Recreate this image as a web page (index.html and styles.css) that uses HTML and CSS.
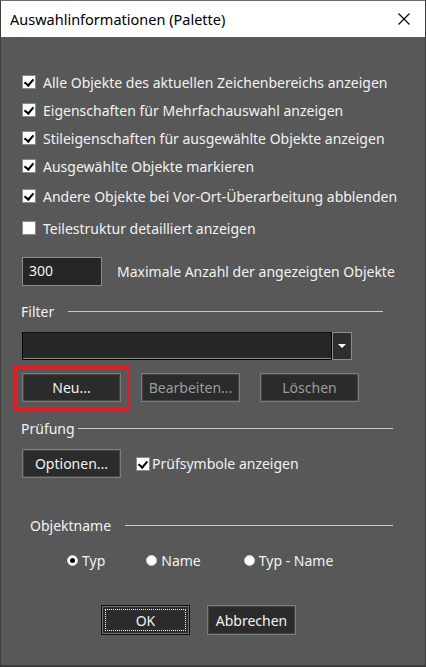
FILE: index.html
```html
<!DOCTYPE html>
<html lang="de">
<head>
    <meta charset="UTF-8">
    <title>Auswahlinformationen (Palette)</title>
    <link rel="stylesheet" href="styles.css">
</head>
<body>
    <div class="dialog">
        <div class="titlebar">
            <span class="title">Auswahlinformationen (Palette)</span>
            <svg class="close" width="12" height="12" viewBox="0 0 12 12">
                <path d="M0.5 0.5 L11.5 11.5 M11.5 0.5 L0.5 11.5" stroke="#000" stroke-width="1.1" fill="none"/>
            </svg>
        </div>

        <div class="content">
            <div class="check-list">
                <label class="check-row"><span class="box checked"></span>Alle Objekte des aktuellen Zeichenbereichs anzeigen</label>
                <label class="check-row"><span class="box checked"></span>Eigenschaften für Mehrfachauswahl anzeigen</label>
                <label class="check-row"><span class="box checked"></span>Stileigenschaften für ausgewählte Objekte anzeigen</label>
                <label class="check-row"><span class="box checked"></span>Ausgewählte Objekte markieren</label>
                <label class="check-row row-gap"><span class="box checked"></span>Andere Objekte bei Vor-Ort-Überarbeitung abblenden</label>
                <label class="check-row row-gap2"><span class="box"></span>Teilestruktur detailliert anzeigen</label>
            </div>

            <div class="max-row">
                <div class="textbox">300</div>
                <span>Maximale Anzahl der angezeigten Objekte</span>
            </div>

            <div class="group-head filter-head">
                <span>Filter</span>
                <span class="rule filter-rule"></span>
            </div>

            <div class="combo">
                <div class="combo-field"></div>
                <div class="combo-btn"><span class="arrow"></span></div>
            </div>

            <div class="btn-row">
                <div class="marked"><button class="btn">Neu...</button></div>
                <button class="btn disabled">Bearbeiten...</button>
                <button class="btn disabled">Löschen</button>
            </div>

            <div class="group-head check-head">
                <span>Prüfung</span>
                <span class="rule check-rule"></span>
            </div>

            <div class="options-row">
                <button class="btn">Optionen...</button>
                <label class="check-row small"><span class="box checked"></span>Prüfsymbole anzeigen</label>
            </div>

            <div class="group-head name-head">
                <span>Objektname</span>
                <span class="rule name-rule"></span>
            </div>

            <div class="radio-row">
                <label class="radio"><span class="dot selected"></span>Typ</label>
                <label class="radio"><span class="dot"></span>Name</label>
                <label class="radio"><span class="dot"></span>Typ - Name</label>
            </div>

            <div class="footer">
                <button class="btn default"><span class="focus">OK</span></button>
                <button class="btn">Abbrechen</button>
            </div>
        </div>
    </div>
</body>
</html>
```

FILE: styles.css
```css
* {
    margin: 0;
    padding: 0;
    box-sizing: border-box;
    font-family: 'Noto Sans', 'Open Sans', sans-serif;
}

body {
    background: #3a3a3a;
    width: 426px;
    height: 667px;
}

.dialog {
    width: 426px;
    height: 666px;
    background: #585858;
    border: 1px solid #3c3c3c;
    border-top-color: #6a6a6a;
    display: flex;
    flex-direction: column;
}

.titlebar {
    height: 36px;
    background: #ffffff;
    display: flex;
    align-items: center;
    justify-content: space-between;
    padding: 0 15px 0 9px;
}

.title {
    font-size: 14.5px;
    color: #000;
}

.content {
    padding: 31px 21px 0 21px;
    color: #f2f2f2;
    font-size: 14px;
}

.check-row {
    display: flex;
    align-items: center;
    height: 28px;
    white-space: nowrap;
}

.row-gap {
    margin-top: 2px;
}

.row-gap2 {
    margin-top: 4px;
}

.box {
    width: 14px;
    height: 14px;
    background: #fff;
    border: 1px solid #8a8a8a;
    margin-right: 7px;
    flex-shrink: 0;
    position: relative;
}

.box.checked::after {
    content: "";
    position: absolute;
    left: 3px;
    top: 1px;
    width: 4px;
    height: 7px;
    border: solid #000;
    border-width: 0 2px 2px 0;
    transform: rotate(40deg);
}

.max-row {
    display: flex;
    align-items: center;
    margin-top: 15px;
    white-space: nowrap;
}

.textbox {
    width: 80px;
    height: 29px;
    background: #262626;
    border: 1px solid #8c8c8c;
    padding: 3px 0 0 6px;
    margin-right: 15px;
    color: #f2f2f2;
}

.group-head {
    display: flex;
    align-items: center;
    height: 20px;
    white-space: nowrap;
}

.filter-head {
    margin-top: 15px;
    margin-left: -1px;
}

.rule {
    flex: 1;
    height: 1px;
    background: #c8c8c8;
    margin-left: 4px;
    margin-right: 11px;
}

.filter-rule {
    margin-left: 14px;
    margin-right: 21px;
}

.check-rule {
    margin-left: 3px;
}

.combo {
    display: flex;
    height: 28px;
    margin-top: 11px;
    width: 330px;
}

.combo-field {
    width: 310px;
    background: #262626;
    border: 1px solid #000;
    border-top-color: #111;
    box-shadow: inset 0 -1px 0 #8c8c8c;
}

.combo-btn {
    width: 20px;
    background: #2e2e2e;
    border: 1px solid #8c8c8c;
    display: flex;
    align-items: center;
    justify-content: center;
}

.arrow {
    width: 0;
    height: 0;
    border-left: 4px solid transparent;
    border-right: 4px solid transparent;
    border-top: 4px solid #fff;
}

.btn-row {
    display: flex;
    gap: 20px;
    margin-top: 13px;
}

.btn {
    width: 99px;
    height: 29px;
    background: #2b2b2b;
    border: 1px solid #7c7c7c;
    box-shadow: inset 0 0 0 1px #464646;
    color: #f2f2f2;
    font-size: 14px;
}

.btn-row .btn + .btn {
    margin-left: -2px;
}

.btn-row .btn:last-child {
    margin-left: 0;
}

.btn.disabled {
    color: #9c9c9c;
}

.marked {
    position: relative;
    display: flex;
}

.marked::after {
    content: "";
    position: absolute;
    left: -8px;
    top: -7px;
    right: -9px;
    bottom: -9px;
    border: 3px solid #e31c25;
}

.check-head {
    margin-top: 16px;
    margin-left: -1px;
}

.options-row {
    display: flex;
    align-items: center;
    margin-top: 11px;
}

.options-row .btn {
    margin-right: 15px;
}

.options-row .box {
    margin-right: 2px;
}

.name-head {
    margin-top: 37px;
    margin-left: 8px;
}

.name-rule {
    margin-left: 14px;
}

.radio-row {
    display: flex;
    margin-top: 15px;
    padding-left: 45px;
    height: 20px;
}

.radio {
    display: flex;
    align-items: center;
    white-space: nowrap;
    margin-right: 41px;
}

.radio:nth-child(2) {
    margin-right: 43px;
}

.dot {
    width: 11px;
    height: 11px;
    border-radius: 50%;
    background: #fff;
    border: 1px solid #d0d0d0;
    margin-right: 4px;
    position: relative;
}

.dot.selected::after {
    content: "";
    position: absolute;
    left: 2px;
    top: 2px;
    width: 5px;
    height: 5px;
    border-radius: 50%;
    background: #000;
}

.footer {
    display: flex;
    gap: 17px;
    margin-top: 35px;
    padding-left: 79px;
}

.footer .btn {
    width: 89px;
    height: 30px;
}

.btn.default {
    border: 1px solid #111;
    box-shadow: inset 0 0 0 1px #707070;
    padding: 3px;
}

.focus {
    display: flex;
    align-items: center;
    justify-content: center;
    width: 100%;
    height: 100%;
    border: 1px dotted #fff;
}
```
